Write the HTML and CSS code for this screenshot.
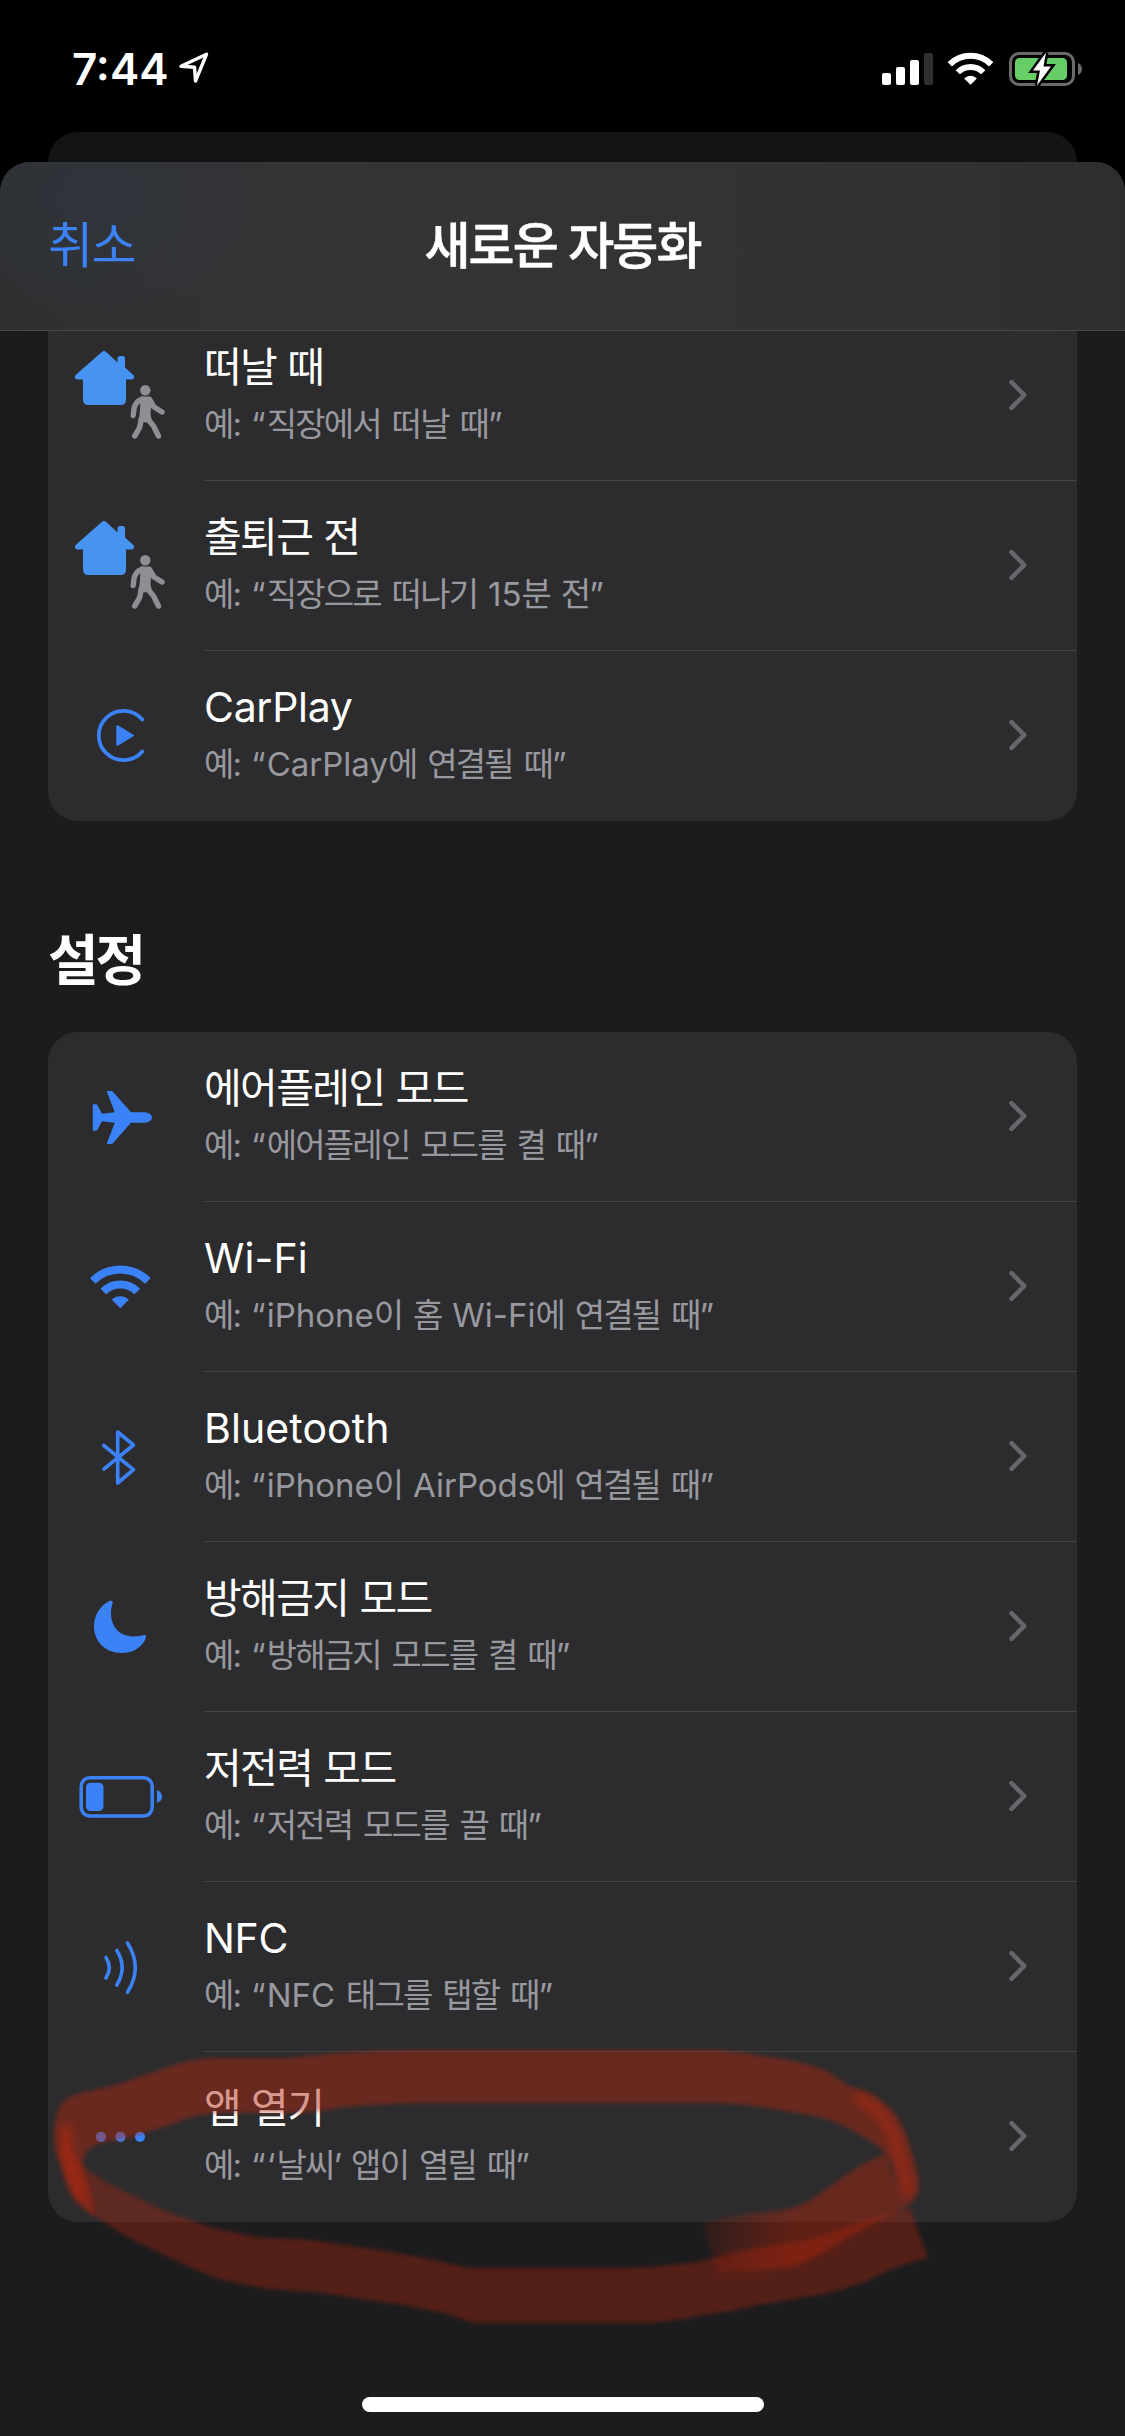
FILE: index.html
```html
<!DOCTYPE html>
<html lang="ko">
<head>
<meta charset="utf-8">
<title>새로운 자동화</title>
<link rel="stylesheet" href="styles.css">
</head>
<body>
<svg class="defs" width="0" height="0" aria-hidden="true">
  <symbol id="home-walk" viewBox="0 0 156 170">
    <path fill="#4793f1" d="M53.5 41.2Q56 38.900 58.500 41.200L69.500 51.500V47.500Q69.500 45 72 45H74.500Q77 45 77 47.500V56.500L84.800 63.500Q86.500 65 86.200 66.500Q85.700 68.500 83.500 68.500H78V88.500Q78 94 72.500 94H40.500Q35 94 35 88.500V68.500H29.500Q27.300 68.500 26.900 66.500Q26.600 65 28.200 63.500Z"/>
    <g fill="none" stroke="#8e8e93" stroke-linecap="round" stroke-linejoin="round">
      <circle cx="97.300" cy="79.300" r="5.200" fill="#8e8e93" stroke="none"/>
      <path stroke-width="5.400" d="M94 88Q87 91 86 98L85.200 104.500M101.500 88.500L106 96L114 101M93 108Q92.500 116 90 119.500L86.700 125M99 107L105.500 115L110.500 125"/>
      <path fill="#8e8e93" stroke-width="4" d="M94.500 87.500H101.500L100.500 104L102 110L96.500 109L93 110L94 98Z"/>
    </g>
  </symbol>
  <symbol id="wifi" viewBox="0 0 60 44">
    <path fill="none" stroke="currentColor" stroke-width="8" d="M2.400 16.400A39 39 0 0 1 57.600 16.400M13 27A24 24 0 0 1 47 27"/>
    <path fill="currentColor" d="M21.500 35.200A12.400 12.400 0 0 1 38.500 35.200L30 43.700Z"/>
  </symbol>
  <symbol id="chevron" viewBox="0 0 20 32">
    <path fill="none" stroke="#67676b" stroke-width="4.500" stroke-linecap="round" stroke-linejoin="round" d="M3.500 3.200L16.300 16L3.500 28.800"/>
  </symbol>
</svg>

<div class="screen">
  <header class="status">
    <div class="clock"><span class="time">7:44</span>
      <svg class="location" viewBox="0 0 30 32"><path fill="none" stroke="#fff" stroke-width="3.400" stroke-linejoin="round" d="M2 14.300L27.500 2.300L16.500 29L15.500 15.200Z"/></svg>
    </div>
    <div class="indicators">
      <svg class="bars" viewBox="0 0 51 32"><rect y="20" width="9" height="12" rx="2" fill="#fff"/><rect x="14" y="14" width="9" height="18" rx="2" fill="#fff"/><rect x="28" y="7" width="9" height="25" rx="2" fill="#fff"/><rect x="42" width="9" height="32" rx="2" fill="#303030"/></svg>
      <svg class="status-wifi"><use href="#wifi"/></svg>
      <svg class="charge" viewBox="0 0 74 34">
        <rect x="1.500" y="1.500" width="63" height="31" rx="8.500" fill="none" stroke="#6b6b6b" stroke-width="3"/>
        <rect x="6" y="6" width="52" height="22" rx="4.500" fill="#67ce67"/>
        <path fill="#6b6b6b" d="M69 11Q73 13 73 17T69 23Z"/>
        <path fill="#fff" stroke="#000" stroke-width="5" paint-order="stroke" d="M37 0.500L24 18.500H31L28 33.500L42 14.500H34.500Z"/>
      </svg>
    </div>
  </header>
  <div class="back-card"></div>

  <main class="sheet">
    <nav class="navbar">
      <a class="cancel">취소</a>
      <h1 class="title">새로운 자동화</h1>
    </nav>
    <div class="content">
      <section class="card first">
        <div class="row"><svg class="icon"><use href="#home-walk"/></svg><div class="body"><div class="text"><div class="name">떠날 때</div><div class="hint">예: <span class="quote">“</span>직장에서 떠날 때”</div></div><svg class="chevron"><use href="#chevron"/></svg></div></div>
        <div class="row"><svg class="icon"><use href="#home-walk"/></svg><div class="body"><div class="text"><div class="name">출퇴근 전</div><div class="hint">예: <span class="quote">“</span>직장으로 떠나기 <span class="en">15</span>분 전”</div></div><svg class="chevron"><use href="#chevron"/></svg></div></div>
        <div class="row"><svg class="icon" viewBox="0 0 156 170"><path fill="none" stroke="currentColor" stroke-width="3.800" stroke-linecap="round" d="M94.300 68.500A24.700 24.700 0 1 0 94.300 100.500"/><path fill="currentColor" stroke="currentColor" stroke-width="2" stroke-linejoin="round" d="M69.300 75.200L85 84.500L69.300 93.800Z"/></svg><div class="body"><div class="text"><div class="name"><span class="en">CarPlay</span></div><div class="hint">예: <span class="quote">“</span><span class="en">CarPlay</span>에 연결될 때”</div></div><svg class="chevron"><use href="#chevron"/></svg></div></div>
      </section>

      <h2 class="heading">설정</h2>

      <section class="card">
        <div class="row"><svg class="icon" viewBox="0 0 156 170"><path fill="currentColor" d="M58.600 59H63Q64.500 59 65.300 60.300L83 80.300H97Q104 81.500 104 85.500T97 90.700H83L65.300 110.700Q64.500 112 63 112H58.600L66.800 90.700L54 89.300L49.300 98Q48.900 98.700 48 98.700H44.800V72.300H48Q48.900 72.300 49.300 73L54 81.700L66.800 80.300Z"/></svg><div class="body"><div class="text"><div class="name">에어플레인 모드</div><div class="hint">예: <span class="quote">“</span>에어플레인 모드를 켤 때”</div></div><svg class="chevron"><use href="#chevron"/></svg></div></div>
        <div class="row"><svg class="icon" viewBox="0 0 156 170"><use href="#wifi" x="42.300" y="62.500" width="60" height="44"/></svg><div class="body"><div class="text"><div class="name"><span class="en wide">Wi-Fi</span></div><div class="hint">예: <span class="quote">“</span><span class="en">iPhone</span>이 홈 <span class="en">Wi-Fi</span>에 연결될 때”</div></div><svg class="chevron"><use href="#chevron"/></svg></div></div>
        <div class="row"><svg class="icon" viewBox="0 0 156 170"><path fill="none" stroke="currentColor" stroke-width="3.600" stroke-linecap="round" stroke-linejoin="round" d="M55.800 73.500L85.500 97.700L69.700 111V60L85.500 73L55.800 97.200"/></svg><div class="body"><div class="text"><div class="name"><span class="en wide">Bluetooth</span></div><div class="hint">예: <span class="quote">“</span><span class="en">iPhone</span>이 <span class="en">AirPods</span>에 연결될 때”</div></div><svg class="chevron"><use href="#chevron"/></svg></div></div>
        <div class="row"><svg class="icon" viewBox="0 0 156 170"><path fill="currentColor" d="M64.500 59.500C65.300 61 63 64 63 71.500C63 85.500 72.500 94.500 86 94.500C93 94.500 96 92.500 97.500 93.300C98.500 94 98 96 97 98C92.500 106.500 84 111 73.500 111C57.500 111 46 99.500 46 84.500C46 73.500 52 63.500 61.500 59C63 58.400 64.200 58.600 64.500 59.500Z"/></svg><div class="body"><div class="text"><div class="name">방해금지 모드</div><div class="hint">예: <span class="quote">“</span>방해금지 모드를 켤 때”</div></div><svg class="chevron"><use href="#chevron"/></svg></div></div>
        <div class="row"><svg class="icon" viewBox="0 0 156 170"><rect x="33.200" y="65.800" width="71" height="38.200" rx="8.500" fill="none" stroke="currentColor" stroke-width="3.500"/><rect x="38" y="70.700" width="17.500" height="28.400" rx="4.500" fill="currentColor"/><path fill="currentColor" d="M109 78Q114 80 114 84.500T109 91Z"/></svg><div class="body"><div class="text"><div class="name">저전력 모드</div><div class="hint">예: <span class="quote">“</span>저전력 모드를 끌 때”</div></div><svg class="chevron"><use href="#chevron"/></svg></div></div>
        <div class="row"><svg class="icon" viewBox="0 0 156 170"><path fill="none" stroke="currentColor" stroke-width="3.600" stroke-linecap="round" d="M58 75.500Q64.500 85.500 58 96M68.800 68.500Q79.500 85.500 68.800 103M79.500 61Q95 85.500 79.500 110.300"/></svg><div class="body"><div class="text"><div class="name"><span class="en">NFC</span></div><div class="hint">예: <span class="quote">“</span><span class="en">NFC</span> 태그를 탭할 때”</div></div><svg class="chevron"><use href="#chevron"/></svg></div></div>
        <div class="row"><svg class="icon" viewBox="0 0 156 170"><g fill="currentColor"><circle cx="53" cy="84.800" r="5.100"/><circle cx="72.500" cy="84.800" r="5.100"/><circle cx="92" cy="84.800" r="5.100"/></g></svg><div class="body"><div class="text"><div class="name">앱 열기</div><div class="hint">예: <span class="quote">“‘</span>날씨’ 앱이 열릴 때”</div></div><svg class="chevron"><use href="#chevron"/></svg></div></div>
      </section>
    </div>
    <div class="home-indicator"></div>
  </main>

  <svg class="marker" viewBox="0 2030 1125 310">
    <defs>
      <filter id="soft" color-interpolation-filters="sRGB" x="-5%" y="-10%" width="110%" height="120%"><feGaussianBlur stdDeviation="2.200"/></filter>
      <filter id="glow" color-interpolation-filters="sRGB" x="-50%" y="-50%" width="200%" height="200%"><feGaussianBlur stdDeviation="5"/></filter>
      <linearGradient id="tail" gradientUnits="userSpaceOnUse" x1="700" y1="0" x2="790" y2="0"><stop offset="0" stop-color="#af260e" stop-opacity=".12"/><stop offset="1" stop-color="#af260e" stop-opacity=".46"/></linearGradient>
    </defs>
    <g filter="url(#soft)">
      <path fill="#af260e" fill-opacity=".47" d="M72 2096C90 2089 105 2089 122 2083L165 2068Q190 2059 211 2058H290Q320 2054 343 2053Q380 2050 418 2050H715Q742 2052 762 2056Q800 2060 827 2071L848 2085L873 2095Q890 2105 899 2120Q905 2130 911 2150L918 2174Q921 2200 906 2206C893 2190 897 2166 886 2154Q875 2143 859 2134L838 2123Q818 2116 798 2113Q780 2110 762 2107Q742 2104 715 2103H418Q380 2104 343 2107Q315 2113 290 2113H240Q220 2112 208 2114Q190 2116 176 2123L144 2133Q128 2139 111 2141Q95 2143 90 2149Q82 2155 83 2166C86 2184 95 2200 94 2216Q80 2208 72 2194Q64 2180 60 2164Q54 2150 54 2137Q54 2102 72 2096Z"/>
      <path fill="url(#tail)" d="M886 2154Q875 2158 859 2166L812 2199Q797 2208 780 2211Q740 2213 705 2222Q704 2234 709 2248Q712 2262 719 2272Q760 2272 794 2266Q812 2260 827 2250L866 2227L906 2207Q896 2190 886 2154Z"/>
      <path fill="#af260e" fill-opacity=".38" d="M64 2128C70 2150 76 2160 83 2166L104 2181L161 2209Q177 2216 194 2221Q215 2230 233 2232Q250 2237 269 2238Q293 2238 319 2241L397 2253Q440 2261 469 2268H614Q640 2268 661 2266Q690 2264 715 2258Q735 2251 755 2248L794 2242Q811 2240 827 2234L873 2218L910 2208L928 2258Q905 2263 881 2274Q869 2281 852 2286Q832 2293 812 2296L758 2305Q730 2312 704 2315Q670 2322 643 2323H476Q460 2319 444 2313Q420 2308 397 2304L315 2292Q292 2291 269 2289Q249 2286 229 2281Q211 2277 194 2269L129 2238L94 2216Q77 2204 70 2185L60 2155Z"/>
    </g>
    <path fill="none" stroke="#b42a12" stroke-opacity=".5" stroke-width="13" stroke-linecap="round" filter="url(#glow)" d="M66 2130Q68 2165 80 2195M860 2098Q892 2118 898 2150L908 2190"/>
  </svg>
</div>
</body>
</html>
```
FILE: styles.css
```css
* { box-sizing: border-box; }

body {
  margin: 0;
  background: #000;
  color: #fff;
  font-family: Inter, "Noto Sans CJK KR", sans-serif;
}

.defs { position: absolute; }

.screen {
  position: relative;
  display: flex;
  flex-direction: column;
  width: 1125px;
  height: 2436px;
  overflow: hidden;
  background: #000;
}

.status {
  display: flex;
  justify-content: space-between;
  height: 132px;
  padding: 52px 42px 0 72px;
}

.clock { display: flex; height: 34px; }
.time {
  width: 107px;
  font-size: 44px;
  font-weight: 600;
  line-height: 34px;
}
.location { width: 30px; height: 32px; }

.indicators { display: flex; height: 34px; }
.bars { width: 51px; height: 32px; margin: 1px 15px 0 0; }
.status-wifi { width: 45px; height: 33px; margin-right: 16px; }
.charge { width: 74px; height: 34px; }

.back-card {
  height: 30px;
  margin: 0 48px;
  border-radius: 30px 30px 0 0;
  background: #141416;
}

.sheet {
  display: flex;
  flex: 1;
  flex-direction: column;
  align-items: stretch;
  border-radius: 30px 30px 0 0;
  overflow: hidden;
  background: #1c1c1e;
}

.navbar {
  display: grid;
  grid-template-columns: 1fr auto 1fr;
  align-items: center;
  height: 169px;
  padding: 0 48px;
  border-bottom: 1px solid #48484a;
  background:
    radial-gradient(ellipse 180px 130px at 90px 35px, #30374299, #30374200),
    linear-gradient(90deg, #2e2f30, #343436 25%, #323234 80%, #2e2e30);
}
.cancel { color: #3b82f7; font-size: 49px; line-height: 60px; letter-spacing: -1.5px; }
.title {
  margin: 0;
  font-size: 50px;
  font-weight: 500;
  line-height: 60px;
  letter-spacing: -1.9px;
  -webkit-text-stroke: 0.6px #fff;
}

.content { flex: 1; overflow: hidden; padding: 0 48px; }

.card { border-radius: 30px; background: #2c2c2e; overflow: hidden; }
.first { margin-top: -20px; border-radius: 0 0 30px 30px; }

.heading {
  height: 70px;
  margin: 104px 0 37px;
  font-size: 55px;
  font-weight: 700;
  line-height: 70px;
  letter-spacing: -3px;
}

.row { display: flex; height: 170px; }
.icon { flex: none; width: 156px; height: 170px; color: #3b82f7; }
.body {
  display: flex;
  flex: 1;
  align-items: center;
  justify-content: space-between;
  padding: 0 49px 1px 0;
  border-bottom: 1px solid #444446;
}
.row:last-child .body { border-bottom-color: transparent; }
.text { display: grid; row-gap: 12px; margin-top: -4px; }
.name { font-size: 41px; line-height: 50px; letter-spacing: -1.6px; word-spacing: 1px; white-space: nowrap; }
.name .en { letter-spacing: -0.3px; }
.name .wide { letter-spacing: 0.1px; }
.hint { color: #98989f; font-size: 33px; line-height: 40px; letter-spacing: -1.8px; word-spacing: 3.2px; white-space: nowrap; }
.hint .en { letter-spacing: 0; }
.quote { letter-spacing: 1.2px; }
.chevron { width: 20px; height: 32px; }

.home-indicator {
  flex: none;
  align-self: center;
  width: 402px;
  height: 15px;
  margin-bottom: 24px;
  border-radius: 8px;
  background: #fff;
}

/* Translucent brush stroke lying over the last row */
.marker {
  position: absolute;
  left: 0;
  top: 2030px;
  width: 1125px;
  height: 310px;
  pointer-events: none;
}
```
